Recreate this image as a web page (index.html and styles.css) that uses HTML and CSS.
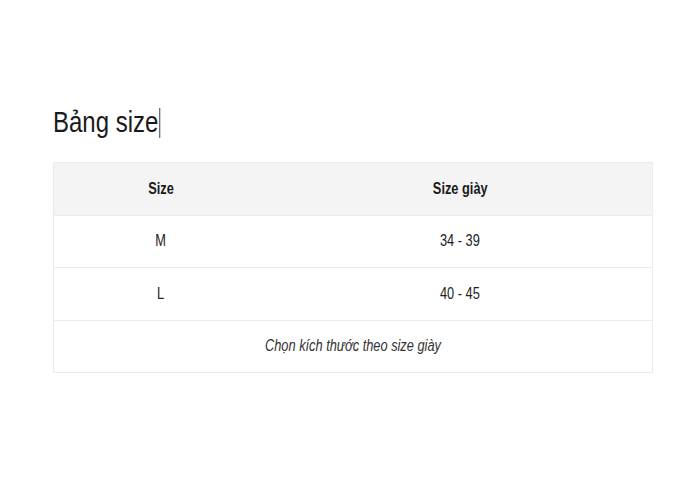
FILE: index.html
```html
<!DOCTYPE html>
<html lang="vi">
<head>
<meta charset="utf-8">
<title>Bảng size</title>
<link rel="stylesheet" href="styles.css">
</head>
<body>
<div class="page">
  <h2 class="title"><span class="narrow narrow-left">Bảng size<span class="caret"></span></span></h2>
  <table class="size-table">
    <colgroup>
      <col class="col-size">
      <col class="col-shoe">
    </colgroup>
    <thead>
      <tr><th><span class="narrow">Size</span></th><th><span class="narrow">Size giày</span></th></tr>
    </thead>
    <tbody>
      <tr><td><span class="narrow">M</span></td><td><span class="narrow">34 - 39</span></td></tr>
      <tr><td><span class="narrow">L</span></td><td><span class="narrow">40 - 45</span></td></tr>
      <tr><td colspan="2" class="note"><span class="narrow">Chọn kích thước theo size giày</span></td></tr>
    </tbody>
  </table>
</div>
</body>
</html>
```

FILE: styles.css
```css
html, body {
  margin: 0;
  padding: 0;
  background: #ffffff;
}
body {
  font-family: "Liberation Sans", Arial, sans-serif;
  color: #222;
}
.page {
  padding: 104px 38px 0 53px;
  width: 600px;
}
.narrow {
  display: inline-block;
  transform: scaleX(0.8);
  transform-origin: center;
}
.narrow-left {
  transform-origin: left center;
}
.title {
  margin: 0 0 22px 0;
  font-size: 30px;
  font-weight: normal;
  line-height: 36px;
  color: #1a1a1a;
}
.caret {
  display: inline-block;
  width: 1.3px;
  height: 30px;
  background: #111;
  margin-left: 1px;
  vertical-align: -6px;
}
.size-table {
  width: 600px;
  border-collapse: collapse;
  border: 1px solid #ebebeb;
  font-size: 16px;
}
.col-size { width: 214px; }
.size-table th,
.size-table td {
  height: 51.5px;
  padding: 0;
  text-align: center;
  vertical-align: middle;
  border-top: 1px solid #ebebeb;
}
.size-table th {
  background: #f4f4f4;
  font-weight: bold;
  color: #1a1a1a;
}
.size-table td {
  color: #222;
}
.size-table td.note {
  font-style: italic;
  color: #333;
}
```
